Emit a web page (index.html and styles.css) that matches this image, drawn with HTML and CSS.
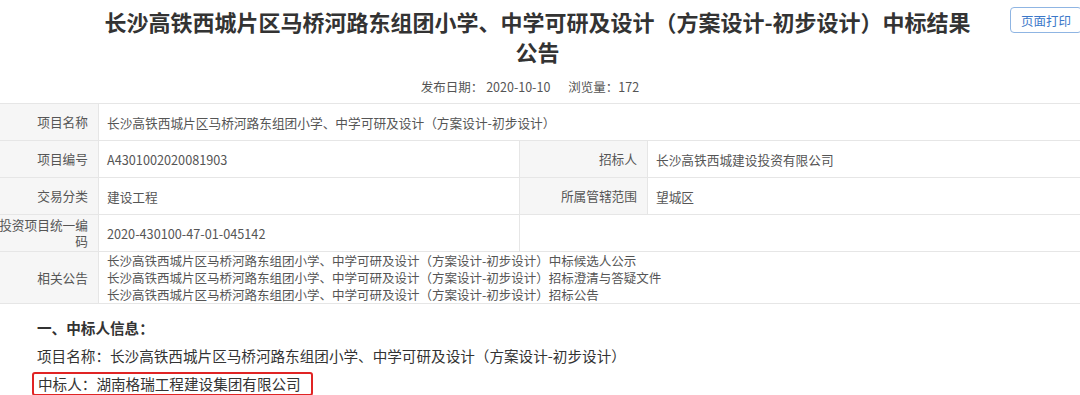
FILE: index.html
```html
<!DOCTYPE html>
<html lang="zh-CN">
<head>
  <meta charset="UTF-8" />
  <meta name="viewport" content="width=device-width, initial-scale=1.0" />
  <title>中标结果公告</title>
  <link rel="stylesheet" href="styles.css">
</head>
<body>
  <div class="page">
    <!-- Header -->
    <div class="header">
      <h1 class="title">长沙高铁西城片区马桥河路东组团小学、中学可研及设计（方案设计-初步设计）中标结果公告</h1>
      <button class="print-btn" type="button">页面打印</button>
    </div>
    <div class="meta">发布日期： 2020-10-10<span class="views">浏览量：172</span></div>

    <!-- Info table -->
    <table class="info">
      <colgroup>
        <col class="c-label">
        <col class="c-mid">
        <col class="c-label2">
        <col>
      </colgroup>
      <tr>
        <th>项目名称</th>
        <td colspan="3">长沙高铁西城片区马桥河路东组团小学、中学可研及设计（方案设计-初步设计）</td>
      </tr>
      <tr>
        <th>项目编号</th>
        <td>A4301002020081903</td>
        <th>招标人</th>
        <td>长沙高铁西城建设投资有限公司</td>
      </tr>
      <tr>
        <th>交易分类</th>
        <td>建设工程</td>
        <th>所属管辖范围</th>
        <td>望城区</td>
      </tr>
      <tr>
        <th>投资项目统一编码</th>
        <td>2020-430100-47-01-045142</td>
        <td colspan="2"></td>
      </tr>
      <tr class="links">
        <th>相关公告</th>
        <td colspan="3">
          <a>长沙高铁西城片区马桥河路东组团小学、中学可研及设计（方案设计-初步设计）中标候选人公示</a>
          <a>长沙高铁西城片区马桥河路东组团小学、中学可研及设计（方案设计-初步设计）招标澄清与答疑文件</a>
          <a>长沙高铁西城片区马桥河路东组团小学、中学可研及设计（方案设计-初步设计）招标公告</a>
        </td>
      </tr>
    </table>

    <!-- Winner info -->
    <div class="content">
      <h3>一、中标人信息：</h3>
      <p>项目名称：长沙高铁西城片区马桥河路东组团小学、中学可研及设计（方案设计-初步设计）</p>
      <p><span class="mark">中标人：湖南格瑞工程建设集团有限公司</span></p>
    </div>
  </div>
</body>
</html>
```

FILE: styles.css
```css
* { box-sizing: border-box; }
html, body { overflow: hidden; }
body {
  margin: 0;
  font-family: "Noto Sans CJK SC", sans-serif;
  color: #333;
  background: #fff;
}
.header {
  display: flex;
  align-items: flex-start;
  gap: 30px;
  margin-right: -2px;
}
.title {
  flex: 1;
  margin: 0;
  padding: 6px 0 0 95px;
  font-size: 22px;
  line-height: 30px;
  font-weight: 700;
  text-align: center;
  color: #333;
}
.print-btn {
  flex-shrink: 0;
  margin-top: 7px;
  height: 26px;
  padding: 0 10px;
  border: 1px solid #8fb5e3;
  border-radius: 4px;
  background: #fff;
  color: #3b78c9;
  font-family: inherit;
  font-size: 12.5px;
  cursor: pointer;
}
.meta {
  margin-top: 11px;
  padding-right: 20px;
  font-size: 12.5px;
  line-height: 20px;
  color: #555;
  text-align: center;
}
.views { margin-left: 18px; }
.info {
  width: calc(100% + 8px);
  margin: 6px 0 0 -6px;
  border-collapse: collapse;
  table-layout: fixed;
  font-size: 12.7px;
  color: #555;
}
.c-label { width: 104px; }
.c-mid { width: 421px; }
.c-label2 { width: 128px; }
.info th, .info td {
  height: 37px;
  border: 1px solid #e6e6e6;
  vertical-align: middle;
}
.info th {
  padding: 0 10px 0 0;
  background: #f6f6f6;
  font-weight: 400;
  text-align: right;
  color: #555;
  line-height: 16px;
}
.info td { padding: 0 8px; }
.links td, .links th { height: 52px; }
.links td { font-size: 12.5px; }
.links a {
  display: block;
  line-height: 17px;
  color: #555;
  white-space: nowrap;
}
.content {
  padding: 10px 0 0 37px;
  font-size: 14.6px;
  color: #333;
}
.content h3 {
  margin: 0;
  font-size: 14.6px;
  line-height: 28px;
  font-weight: 700;
}
.content p {
  margin: 0;
  line-height: 28px;
}
.mark {
  display: inline-block;
  margin-left: -5px;
  padding: 0 10px 0 4px;
  line-height: 20px;
  border: 2px solid #e02424;
  border-radius: 3px;
}
```
